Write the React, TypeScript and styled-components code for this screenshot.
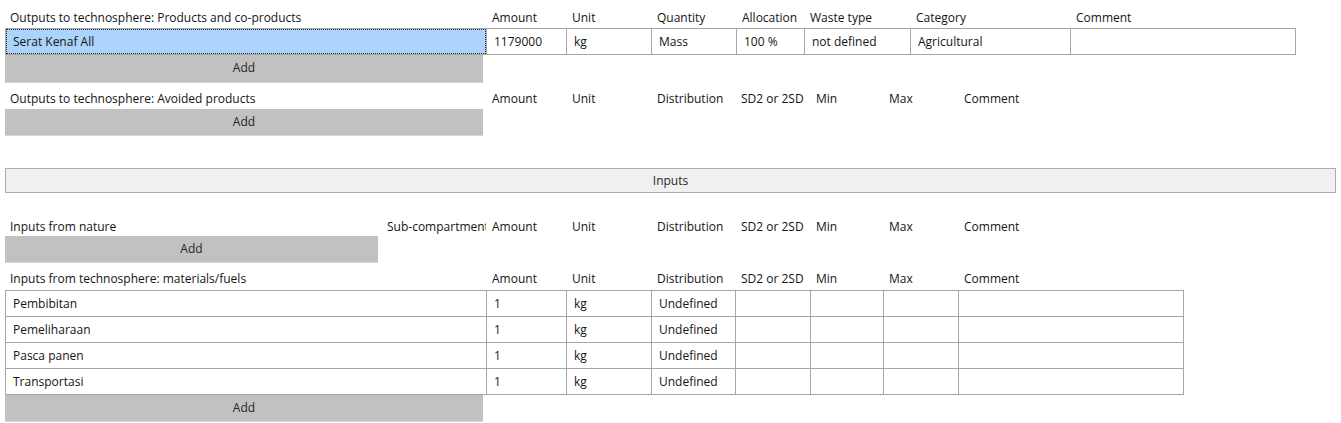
import React from 'react';
import styled, { createGlobalStyle } from 'styled-components';

const GlobalStyle = createGlobalStyle`
  html, body {
    margin: 0;
    padding: 0;
    background: #ffffff;
  }
  body {
    font-family: "Open Sans", "Liberation Sans", Arial, sans-serif;
    font-size: 12px;
    color: #141414;
  }
`;

const Page = styled.div`
  width: 1341px;
  height: 423px;
  padding: 9px 0 0 5px;
  box-sizing: border-box;
  overflow: hidden;
`;

const HeaderRow = styled.div<{ $cols: string; $top: number }>`
  display: grid;
  grid-template-columns: ${(p) => p.$cols};
  column-gap: 1px;
  padding: 0 1px;
  height: 18px;
  margin-top: ${(p) => p.$top}px;
  align-items: start;
`;

const HeaderCell = styled.div<{ $pad?: number }>`
  padding-left: ${(p) => (p.$pad ?? 5)}px;
  white-space: nowrap;
  overflow: hidden;
  line-height: 17px;
`;

const Grid = styled.div<{ $cols: string; $top?: number }>`
  display: inline-grid;
  grid-template-columns: ${(p) => p.$cols};
  grid-auto-rows: 25px;
  gap: 1px;
  padding: 1px;
  background: #a6a6a6;
  margin-top: ${(p) => p.$top ?? 0}px;
  vertical-align: top;
`;

const Cell = styled.div<{ $selected?: boolean }>`
  background: ${(p) => (p.$selected ? '#abd3fb' : '#ffffff')};
  padding-left: 7px;
  display: flex;
  align-items: center;
  white-space: nowrap;
  overflow: hidden;
  outline: ${(p) => (p.$selected ? '1px dotted #2a2a2a' : 'none')};
  outline-offset: -1px;
`;

const Block = styled.div`
  display: block;
  line-height: 0;
`;

const AddButton = styled.div<{ $width: number; $height?: number; $top?: number }>`
  width: ${(p) => p.$width}px;
  height: ${(p) => p.$height ?? 27}px;
  margin-top: ${(p) => p.$top ?? 0}px;
  padding-bottom: 2px;
  background: #c1c1c1;
  border-bottom: 1px solid #d6d6d6;
  box-sizing: border-box;
  display: flex;
  align-items: center;
  justify-content: center;
  color: #262626;
  cursor: default;
`;

const SectionBar = styled.div`
  width: 1331px;
  height: 25px;
  margin-top: 32px;
  background: #f0f0f0;
  border: 1px solid #acacac;
  box-sizing: border-box;
  display: flex;
  align-items: center;
  justify-content: center;
  padding-bottom: 1px;
  color: #262626;
`;

const outCols = '480px 79px 84px 84px 67px 105px 159px 224px';
const inCols = '480px 79px 84px 83px 74px 72px 74px 224px';
const natureCols = '374px 105px 79px 84px 83px 74px 72px 74px 224px';

const outputHeaders = ['Amount', 'Unit', 'Quantity', 'Allocation', 'Waste type', 'Category', 'Comment'];
const flowHeaders = ['Amount', 'Unit', 'Distribution', 'SD2 or 2SD', 'Min', 'Max', 'Comment'];

const products = [['Serat Kenaf All', '1179000', 'kg', 'Mass', '100 %', 'not defined', 'Agricultural', '']];

const materials = ['Pembibitan', 'Pemeliharaan', 'Pasca panen', 'Transportasi'].map((name) => [
  name,
  '1',
  'kg',
  'Undefined',
  '',
  '',
  '',
  '',
]);

export default function App() {
  return (
    <>
      <GlobalStyle />
      <Page>
        <HeaderRow $cols={outCols} $top={0}>
          <HeaderCell $pad={4}>Outputs to technosphere: Products and co-products</HeaderCell>
          {outputHeaders.map((h) => (
            <HeaderCell key={h}>{h}</HeaderCell>
          ))}
        </HeaderRow>
        <Block>
          <Grid $cols={outCols} $top={1}>
            {products.map((row, r) =>
              row.map((v, i) => (
                <Cell key={`${r}-${i}`} $selected={i === 0}>
                  {v}
                </Cell>
              ))
            )}
          </Grid>
        </Block>
        <AddButton $width={478} $height={28}>Add</AddButton>

        <HeaderRow $cols={inCols} $top={7}>
          <HeaderCell $pad={4}>Outputs to technosphere: Avoided products</HeaderCell>
          {flowHeaders.map((h) => (
            <HeaderCell key={h}>{h}</HeaderCell>
          ))}
        </HeaderRow>
        <AddButton $width={478} $top={1}>Add</AddButton>

        <SectionBar>Inputs</SectionBar>

        <HeaderRow $cols={natureCols} $top={25}>
          <HeaderCell $pad={4}>Inputs from nature</HeaderCell>
          <HeaderCell $pad={6}>Sub-compartment</HeaderCell>
          {flowHeaders.map((h) => (
            <HeaderCell key={h}>{h}</HeaderCell>
          ))}
        </HeaderRow>
        <AddButton $width={373}>Add</AddButton>

        <HeaderRow $cols={inCols} $top={7}>
          <HeaderCell $pad={4}>Inputs from technosphere: materials/fuels</HeaderCell>
          {flowHeaders.map((h) => (
            <HeaderCell key={h}>{h}</HeaderCell>
          ))}
        </HeaderRow>
        <Block>
          <Grid $cols={inCols} $top={2}>
            {materials.map((row, r) =>
              row.map((v, i) => <Cell key={`${r}-${i}`}>{v}</Cell>)
            )}
          </Grid>
        </Block>
        <AddButton $width={478}>Add</AddButton>
      </Page>
    </>
  );
}
